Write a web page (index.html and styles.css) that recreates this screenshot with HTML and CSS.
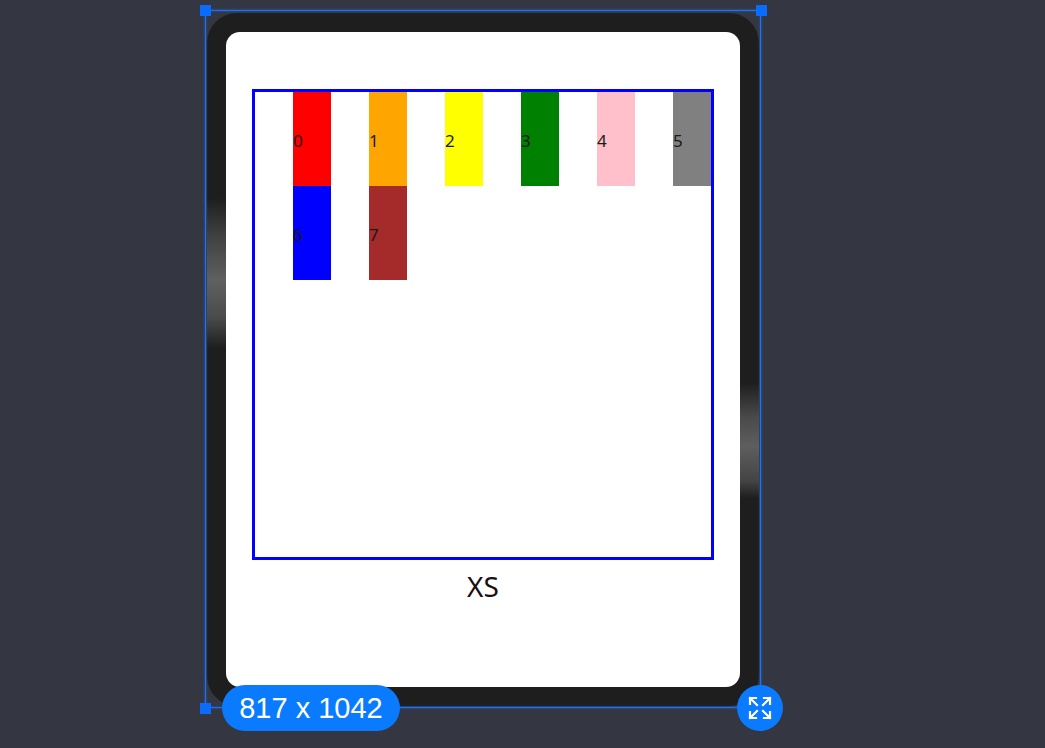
FILE: index.html
```html
<!DOCTYPE html>
<html>
<head>
<meta charset="utf-8">
<link rel="stylesheet" href="styles.css">
</head>
<body>
<div class="stage">
  <div class="device">
    <div class="reflect reflect-left"></div>
    <div class="reflect reflect-right"></div>
    <div class="screen">
      <div class="gridbox">
        <div class="cell"><div class="item c0">0</div></div>
        <div class="cell"><div class="item c1">1</div></div>
        <div class="cell"><div class="item c2">2</div></div>
        <div class="cell"><div class="item c3">3</div></div>
        <div class="cell"><div class="item c4">4</div></div>
        <div class="cell"><div class="item c5">5</div></div>
        <div class="cell"><div class="item c6">6</div></div>
        <div class="cell"><div class="item c7">7</div></div>
      </div>
      <div class="label">XS</div>
    </div>
  </div>
  <div class="selection"></div>
  <div class="handle h-tl"></div>
  <div class="handle h-tr"></div>
  <div class="handle h-bl"></div>
  <div class="badge">817 x 1042</div>
  <div class="expand">
    <svg width="26" height="26" viewBox="0 0 26 26" fill="none" stroke="#fff" stroke-width="2.2" stroke-linecap="square">
      <path d="M3 9V3h6M3 3l7 7"/>
      <path d="M23 9V3h-6M23 3l-7 7"/>
      <path d="M3 17v6h6M3 23l7-7"/>
      <path d="M23 17v6h-6M23 23l-7-7"/>
    </svg>
  </div>
</div>
</body>
</html>
```
FILE: styles.css
```css
html, body {
  margin: 0;
  padding: 0;
  background: #343741;
}
.stage {
  position: relative;
  width: 1045px;
  height: 748px;
  overflow: hidden;
  background: #343741;
  font-family: "Noto Sans", "DejaVu Sans", sans-serif;
}
.device {
  position: absolute;
  left: 207px;
  top: 13px;
  width: 552px;
  height: 693px;
  box-sizing: border-box;
  padding: 19px;
  background: #1e1e1e;
  border-radius: 30px;
}
.reflect {
  position: absolute;
  width: 19px;
}
.reflect-left {
  left: 0;
  top: 185px;
  height: 150px;
  background: linear-gradient(180deg, rgba(70,70,70,0) 0%, #404040 25%, #606060 55%, #4a4a4a 80%, rgba(60,60,60,0) 100%);
}
.reflect-right {
  right: 0;
  top: 370px;
  height: 115px;
  background: linear-gradient(180deg, rgba(70,70,70,0) 0%, #4a4a4a 30%, #5e5e5e 55%, #444 85%, rgba(60,60,60,0) 100%);
}
.screen {
  position: relative;
  width: 514px;
  height: 655px;
  background: #fff;
  border-radius: 14px;
  box-sizing: border-box;
  padding: 57px 26px 0 26px;
  display: flex;
  flex-direction: column;
}
.gridbox {
  width: 462px;
  height: 471px;
  box-sizing: border-box;
  border: 3px solid #0000ff;
  display: grid;
  grid-template-columns: repeat(6, 76px);
  grid-auto-rows: 94px;
  align-content: start;
}
.cell {
  display: flex;
  justify-content: flex-end;
}
.item {
  width: 38px;
  height: 94px;
  display: flex;
  align-items: center;
  font-size: 17px;
  color: #1a1a1a;
  line-height: 1;
  padding-top: 2px;
  box-sizing: border-box;
}
.c0 { background: #ff0000; }
.c1 { background: #ffa500; }
.c2 { background: #ffff00; }
.c3 { background: #008000; }
.c4 { background: #ffc0cb; }
.c5 { background: #808080; }
.c6 { background: #0000ff; }
.c7 { background: #a52a2a; }
.label {
  text-align: center;
  font-size: 28px;
  color: #1a1010;
  margin-top: 8px;
  line-height: 36px;
}
.selection {
  position: absolute;
  left: 205px;
  top: 10px;
  width: 554px;
  height: 696px;
  border: 1px solid #1a73ff;
  box-shadow: 0 0 3px rgba(26,115,255,0.6), inset 0 0 3px rgba(26,115,255,0.5);
}
.handle {
  position: absolute;
  width: 11px;
  height: 11px;
  background: #0a6cff;
}
.h-tl { left: 200px; top: 5px; }
.h-tr { left: 756px; top: 5px; }
.h-bl { left: 200px; top: 703px; }
.badge {
  position: absolute;
  left: 222px;
  top: 685px;
  width: 178px;
  height: 46px;
  border-radius: 23px;
  background: #0a7aff;
  color: #fff;
  font-family: "Liberation Sans", Arial, sans-serif;
  font-size: 29px;
  line-height: 46px;
  text-align: center;
}
.expand {
  position: absolute;
  left: 737px;
  top: 685px;
  width: 46px;
  height: 46px;
  border-radius: 50%;
  background: #0a7aff;
  display: flex;
  align-items: center;
  justify-content: center;
}
```
